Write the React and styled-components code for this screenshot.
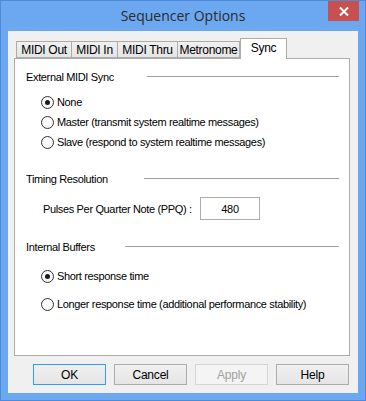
import React from "react"
import styled, { createGlobalStyle } from "styled-components"

const GlobalStyle = createGlobalStyle`
	html, body {
		margin: 0;
		padding: 0;
		background: #6ba8ef;
	}
	* {
		box-sizing: border-box;
	}
`

const Window = styled.div`
	width: 366px;
	height: 401px;
	background: #6ba8ef;
	border: 1px solid #4d8ad9;
	display: flex;
	flex-direction: column;
	position: relative;
	font-family: "Liberation Sans", Arial, sans-serif;
	font-size: 11px;
	letter-spacing: -0.35px;
	color: #000;
`

const TitleBar = styled.div`
	height: 30px;
	display: flex;
	align-items: center;
	justify-content: center;
	font-family: "Open Sans", "Noto Sans", sans-serif;
	font-size: 14px;
	letter-spacing: 0;
	color: #2b2b2b;
	padding-bottom: 1px;
`

const CloseButton = styled.div`
	position: absolute;
	top: 0;
	right: 6px;
	width: 31px;
	height: 20px;
	background: #c75050;
	display: flex;
	align-items: center;
	justify-content: center;
`

const Client = styled.div`
	margin: 0 7px 0 7px;
	height: 362px;
	background: #f0f0f0;
	display: flex;
	flex-direction: column;
	padding: 7px 8px 0 6px;
`

const TabStrip = styled.div`
	height: 20px;
	display: flex;
	align-items: flex-end;
	padding-left: 2px;
	position: relative;
	z-index: 1;
`

const Tab = styled.div`
	height: ${(p) => (p.$active ? "21px" : "17px")};
	width: ${(p) => p.$w}px;
	margin-bottom: ${(p) => (p.$active ? "-1px" : "0")};
	border: 1px solid #acacac;
	border-bottom: ${(p) => (p.$active ? "none" : "1px solid #acacac")};
	border-left: ${(p) => (p.$first || p.$active ? "1px solid #acacac" : "none")};
	background: ${(p) => (p.$active ? "#fff" : "linear-gradient(#f0f0f0, #e5e5e5)")};
	display: flex;
	align-items: ${(p) => (p.$active ? "flex-start" : "center")};
	padding-top: ${(p) => (p.$active ? "2px" : "0")};
	justify-content: center;
	white-space: nowrap;
	font-size: 12px;
	letter-spacing: -0.3px;
`

const Panel = styled.div`
	width: 336px;
	height: 298px;
	background: #fff;
	border: 1px solid #acacac;
	padding: 11px 10px 0 11px;
	display: flex;
	flex-direction: column;
`

const GroupHeader = styled.div`
	height: 14px;
	display: flex;
	align-items: center;
	margin-top: ${(p) => p.$mt || 0}px;
	white-space: nowrap;
`

const HeaderLabel = styled.span`
	width: ${(p) => p.$w}px;
	flex-shrink: 0;
`

const HeaderLine = styled.div`
	flex: 1;
	height: 1px;
	background: #a0a0a0;
	margin-top: -2px;
`

const RadioRow = styled.div`
	height: 20px;
	display: flex;
	align-items: center;
	margin-top: ${(p) => p.$mt || 0}px;
	padding-left: 15px;
	white-space: nowrap;
`

const RadioCircle = styled.span`
	width: 13px;
	height: 13px;
	border-radius: 50%;
	border: 1px solid #333;
	background: radial-gradient(circle at 50% 40%, #fff, #f0f0f0);
	display: flex;
	align-items: center;
	justify-content: center;
	margin-right: 3px;
	flex-shrink: 0;
`

const RadioDot = styled.span`
	width: 5px;
	height: 5px;
	border-radius: 50%;
	background: #1a1a1a;
`

const FieldRow = styled.div`
	height: 23px;
	display: flex;
	align-items: center;
	margin-top: ${(p) => p.$mt || 0}px;
	padding-left: 17px;
	white-space: nowrap;
`

const FieldLabel = styled.span`
	width: 157px;
`

const NumberBox = styled.div`
	width: 60px;
	height: 23px;
	border: 1px solid #abadb3;
	display: flex;
	align-items: center;
	justify-content: center;
	background: #fff;
`

const ButtonRow = styled.div`
	display: flex;
	justify-content: flex-end;
	gap: 8px;
	margin-top: 8px;
	padding-right: 1px;
`

const Button = styled.div`
	width: 73px;
	height: 21px;
	display: flex;
	align-items: center;
	justify-content: center;
	border: 1px solid ${(p) => (p.$default ? "#3399ff" : p.$disabled ? "#d5d5d5" : "#acacac")};
	background: ${(p) => (p.$disabled ? "#f4f4f4" : "linear-gradient(#f0f0f0, #e5e5e5)")};
	color: ${(p) => (p.$disabled ? "#a0a0a0" : "#000")};
	font-size: 12px;
	letter-spacing: -0.2px;
`

const Radio = ({ checked, children, mt }) => (
	<RadioRow $mt={mt}>
		<RadioCircle>{checked && <RadioDot />}</RadioCircle>
		{children}
	</RadioRow>
)

const tabs = [
	{ label: "MIDI Out", w: 56 },
	{ label: "MIDI In", w: 46 },
	{ label: "MIDI Thru", w: 60 },
	{ label: "Metronome", w: 62 },
	{ label: "Sync", w: 47, active: true }
]

const App = () => {
	return (
		<>
			<GlobalStyle />
			<Window>
				<TitleBar>Sequencer Options</TitleBar>
				<CloseButton>
					<svg width="10" height="9" viewBox="0 0 10 9">
						<path d="M1 0.5 L9 8.5 M9 0.5 L1 8.5" stroke="#fff" strokeWidth="2" />
					</svg>
				</CloseButton>
				<Client>
					<TabStrip>
						{tabs.map((t, i) => (
							<Tab key={t.label} $w={t.w} $active={t.active} $first={i === 0}>
								{t.label}
							</Tab>
						))}
					</TabStrip>
					<Panel>
						<GroupHeader>
							<HeaderLabel $w={121}>External MIDI Sync</HeaderLabel>
							<HeaderLine />
						</GroupHeader>
						<Radio checked mt={8}>None</Radio>
						<Radio>Master (transmit system realtime messages)</Radio>
						<Radio>Slave (respond to system realtime messages)</Radio>

						<GroupHeader $mt={20}>
							<HeaderLabel $w={118}>Timing Resolution</HeaderLabel>
							<HeaderLine />
						</GroupHeader>
						<FieldRow $mt={11}>
							<FieldLabel>Pulses Per Quarter Note (PPQ) :</FieldLabel>
							<NumberBox>480</NumberBox>
						</FieldRow>

						<GroupHeader $mt={20}>
							<HeaderLabel $w={99}>Internal Buffers</HeaderLabel>
							<HeaderLine />
						</GroupHeader>
						<Radio checked mt={12}>Short response time</Radio>
						<Radio mt={8}>Longer response time (additional performance stability)</Radio>
					</Panel>
					<ButtonRow>
						<Button $default>OK</Button>
						<Button>Cancel</Button>
						<Button $disabled>Apply</Button>
						<Button>Help</Button>
					</ButtonRow>
				</Client>
			</Window>
		</>
	)
}

export default App
